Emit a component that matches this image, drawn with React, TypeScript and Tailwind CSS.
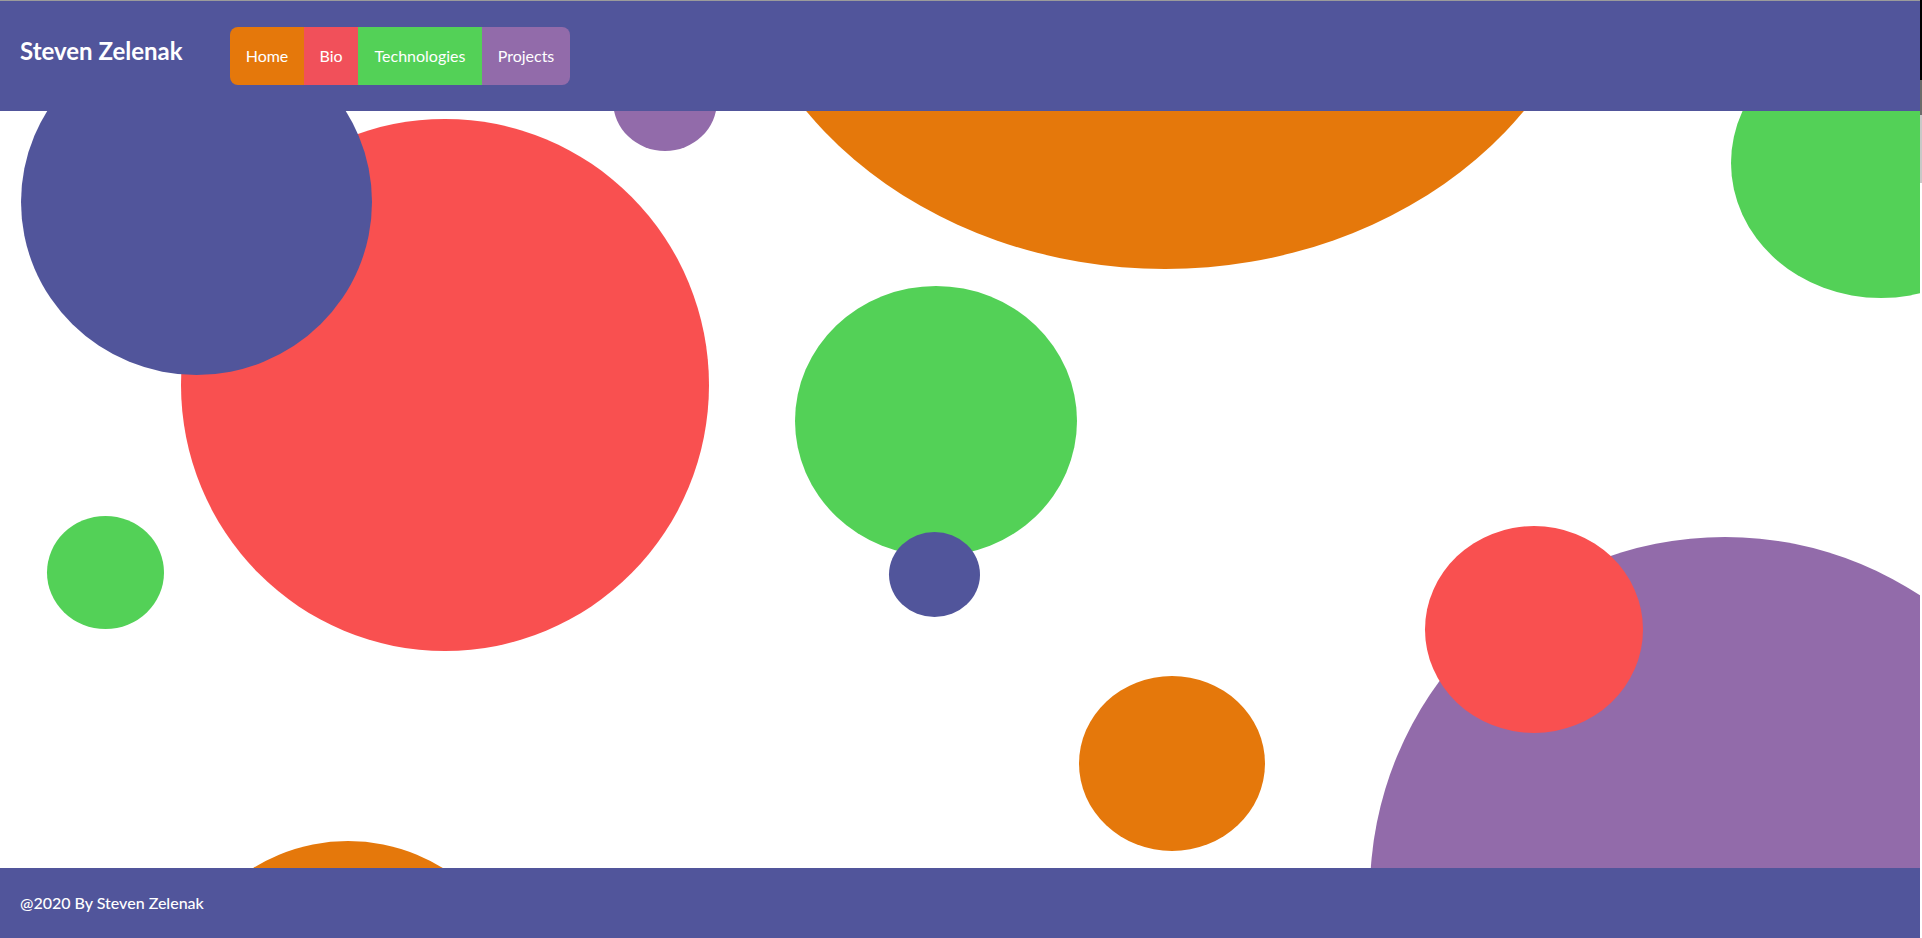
import React from "react";

export default function App() {
  return (
    <div
      className="flex w-[1922px] h-[938px] overflow-hidden bg-white"
      style={{ fontFamily: "Lato, 'Open Sans', sans-serif" }}
    >
      <div className="flex flex-col w-[1920px] h-[938px]">
        <header className="relative z-10 flex items-center h-[111px] border-t border-[#9b9b9b] bg-[#51559b] pl-5">
          <div className="w-[210px] mb-[11px] text-[24px] leading-none font-bold text-white">
            Steven Zelenak
          </div>
          <nav className="flex h-[58px] rounded-lg overflow-hidden text-[16px] text-white">
            <a className="flex items-center justify-center w-[74px] bg-[#e5780b]">Home</a>
            <a className="flex items-center justify-center w-[54px] bg-[#f1505a]">Bio</a>
            <a className="flex items-center justify-center w-[124px] bg-[#53d157]">Technologies</a>
            <a className="flex items-center justify-center w-[88px] bg-[#926baa]">Projects</a>
          </nav>
        </header>
        <main className="relative flex-1 overflow-hidden bg-white">
          <div className="absolute left-[725px] top-[-592px] w-[880px] h-[750px] rounded-[50%] bg-[#e5780b]" />
          <div className="absolute left-[613px] top-[-60px] w-[104px] h-[100px] rounded-[50%] bg-[#926baa]" />
          <div className="absolute left-[181px] top-[8px] w-[528px] h-[532px] rounded-[50%] bg-[#f95050]" />
          <div className="absolute left-[21px] top-[-82px] w-[351px] h-[346px] rounded-[50%] bg-[#51559b]" />
          <div className="absolute left-[1731px] top-[-83px] w-[300px] h-[270px] rounded-[50%] bg-[#53d157]" />
          <div className="absolute left-[47px] top-[405px] w-[117px] h-[113px] rounded-[50%] bg-[#53d157]" />
          <div className="absolute left-[795px] top-[175px] w-[282px] h-[270px] rounded-[50%] bg-[#53d157]" />
          <div className="absolute left-[889px] top-[421px] w-[91px] h-[85px] rounded-[50%] bg-[#51559b]" />
          <div className="absolute left-[1079px] top-[565px] w-[186px] h-[175px] rounded-[50%] bg-[#e5780b]" />
          <div className="absolute left-[1370px] top-[426px] w-[710px] h-[710px] rounded-[50%] bg-[#926baa]" />
          <div className="absolute left-[1425px] top-[415px] w-[218px] h-[207px] rounded-[50%] bg-[#f95050]" />
          <div className="absolute left-[168px] top-[730px] w-[360px] h-[360px] rounded-[50%] bg-[#e5780b]" />
        </main>
        <footer className="relative z-10 flex items-center h-[70px] bg-[#51559b] pl-5 text-[16px] font-medium text-white">
          @2020 By Steven Zelenak
        </footer>
      </div>
      <div className="flex flex-col w-[2px] h-[938px]">
        <div className="h-[80px] bg-black" />
        <div className="h-[35px] bg-[#6b6b6b]" />
        <div className="h-[68px] bg-[#c8c8c8]" />
        <div className="flex-1 bg-white" />
      </div>
    </div>
  );
}
